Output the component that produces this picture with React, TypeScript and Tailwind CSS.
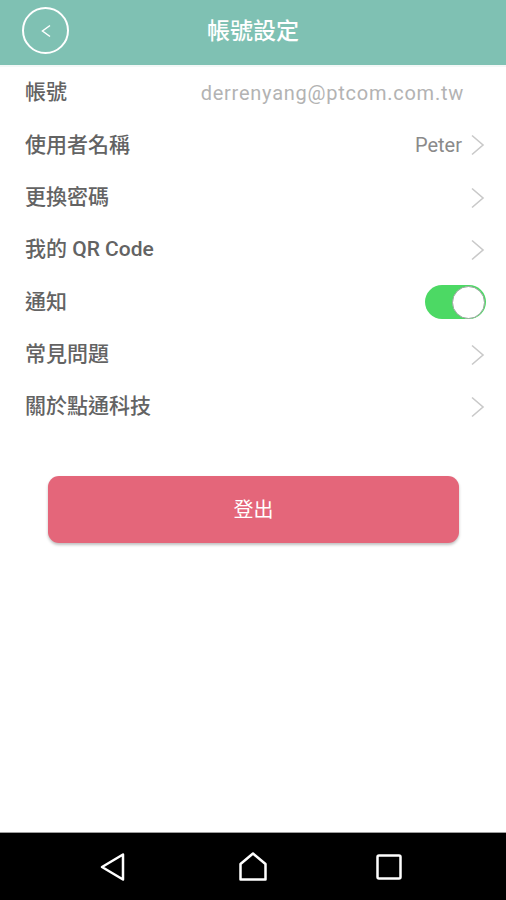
import React from "react";

const Chevron = () => (
  <svg width="16" height="22" viewBox="0 0 16 22" className="shrink-0">
    <path d="M2 1.5 L13 11 L2 20.5" fill="none" stroke="#c9c9c9" strokeWidth="1.6" />
  </svg>
);

const Row = ({ label, children }: { label: string; children?: React.ReactNode }) => (
  <div className="flex h-[52.3px] items-center justify-between pl-[25px] pr-[20px]">
    <span className="text-[21px] font-medium text-[#636363]">{label}</span>
    <div className="flex items-center gap-[8px]">{children}</div>
  </div>
);

export default function App() {
  return (
    <div
      className="flex h-[900px] w-[506px] flex-col bg-white"
      style={{ fontFamily: 'Roboto, "Noto Sans CJK TC", sans-serif' }}
    >
      <div className="relative flex h-[65px] shrink-0 items-center justify-center bg-[#7fc1b3]">
        <div className="absolute left-[22px] top-[7px] flex h-[47px] w-[47px] items-center justify-center rounded-full border-2 border-white">
          <svg width="12" height="14" viewBox="0 0 12 14">
            <path d="M10 1.5 L2.5 7 L10 12.5" fill="none" stroke="white" strokeWidth="1.5" />
          </svg>
        </div>
        <span className="text-[23px] font-medium text-white">帳號設定</span>
      </div>
      <div className="h-[2px] shrink-0 bg-[#f3f8f7]" />

      <div className="flex flex-col">
        <Row label="帳號">
          <span className="pr-[22px] text-[20px] tracking-[0.75px] text-[#b3b3b3]">derrenyang@ptcom.com.tw</span>
        </Row>
        <Row label="使用者名稱">
          <span className="text-[20px] text-[#8a8a8a]">Peter</span>
          <Chevron />
        </Row>
        <Row label="更換密碼">
          <Chevron />
        </Row>
        <Row label="我的 QR Code">
          <Chevron />
        </Row>
        <Row label="通知">
          <div className="relative h-[34px] w-[61px] rounded-full bg-[#4cd964]">
            <div className="absolute right-[1px] top-[0.5px] h-[33px] w-[33px] rounded-full border border-[#9aa89e] bg-white" />
          </div>
        </Row>
        <Row label="常見問題">
          <Chevron />
        </Row>
        <Row label="關於點通科技">
          <Chevron />
        </Row>
      </div>

      <div className="mt-[43px] px-[48px]">
        <div className="flex h-[67px] w-[411px] items-center justify-center rounded-[11px] bg-[#e4667a] shadow-[0_2px_3px_rgba(0,0,0,0.25)]">
          <span className="text-[20px] text-white">登出</span>
        </div>
      </div>

      <div className="flex-1" />

      <div className="h-[1px] shrink-0 bg-[#9e9e9e]" />
      <div className="flex h-[67px] shrink-0 items-center bg-black">
        <div className="ml-[98px] flex items-center gap-[110px]">
          <svg width="30" height="30" viewBox="0 0 30 30">
            <path d="M25 2.5 L4 15 L25 27.5 Z" fill="none" stroke="white" strokeWidth="2.5" strokeLinejoin="round" />
          </svg>
          <svg width="30" height="30" viewBox="0 0 30 30">
            <path d="M2.5 27.5 L2.5 12 L15 1.5 L27.5 12 L27.5 27.5 Z" fill="none" stroke="white" strokeWidth="2.5" strokeLinejoin="round" />
          </svg>
          <svg width="30" height="30" viewBox="0 0 30 30" className="-ml-[4px]">
            <rect x="3.5" y="3.5" width="23" height="23" rx="1.5" fill="none" stroke="white" strokeWidth="2.5" />
          </svg>
        </div>
      </div>
    </div>
  );
}
